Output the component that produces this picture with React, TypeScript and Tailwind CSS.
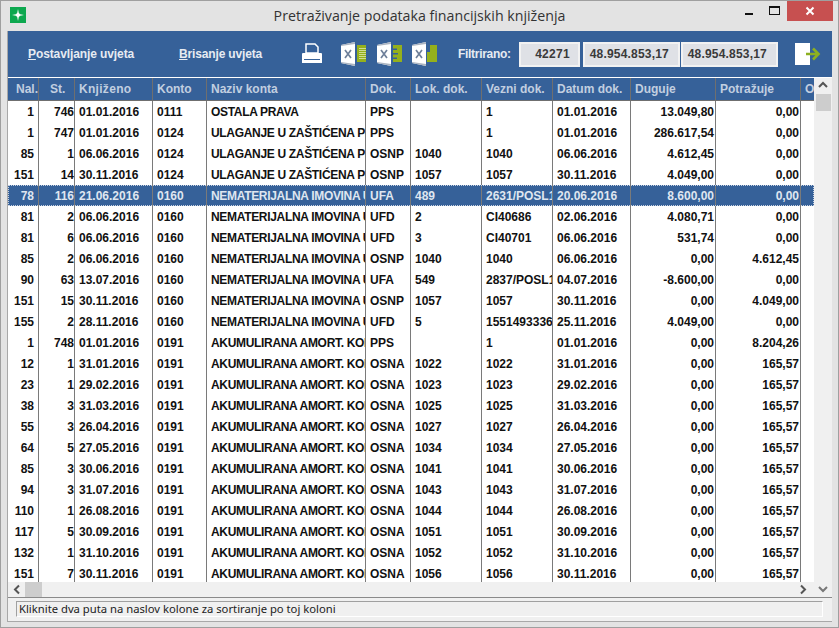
import React from "react";

const U = "ULAGANJE U ZAŠTIĆENA PRAVA";
const N = "NEMATERIJALNA IMOVINA U PRIPREMI";
const A = "AKUMULIRANA AMORT. KONCESIJA";
const rows: string[][] = [
  ["1","746","01.01.2016","0111","OSTALA PRAVA","PPS","","1","01.01.2016","13.049,80","0,00"],
  ["1","747","01.01.2016","0124",U,"PPS","","1","01.01.2016","286.617,54","0,00"],
  ["85","1","06.06.2016","0124",U,"OSNP","1040","1040","06.06.2016","4.612,45","0,00"],
  ["151","14","30.11.2016","0124",U,"OSNP","1057","1057","30.11.2016","4.049,00","0,00"],
  ["78","116","21.06.2016","0160",N,"UFA","489","2631/POSL1","20.06.2016","8.600,00","0,00"],
  ["81","2","06.06.2016","0160",N,"UFD","2","CI40686","02.06.2016","4.080,71","0,00"],
  ["81","6","06.06.2016","0160",N,"UFD","3","CI40701","06.06.2016","531,74","0,00"],
  ["85","2","06.06.2016","0160",N,"OSNP","1040","1040","06.06.2016","0,00","4.612,45"],
  ["90","63","13.07.2016","0160",N,"UFA","549","2837/POSL1","04.07.2016","-8.600,00","0,00"],
  ["151","15","30.11.2016","0160",N,"OSNP","1057","1057","30.11.2016","0,00","4.049,00"],
  ["155","2","28.11.2016","0160",N,"UFD","5","1551493336","25.11.2016","4.049,00","0,00"],
  ["1","748","01.01.2016","0191",A,"PPS","","1","01.01.2016","0,00","8.204,26"],
  ["12","1","31.01.2016","0191",A,"OSNA","1022","1022","31.01.2016","0,00","165,57"],
  ["23","1","29.02.2016","0191",A,"OSNA","1023","1023","29.02.2016","0,00","165,57"],
  ["38","3","31.03.2016","0191",A,"OSNA","1025","1025","31.03.2016","0,00","165,57"],
  ["55","3","26.04.2016","0191",A,"OSNA","1027","1027","26.04.2016","0,00","165,57"],
  ["64","5","27.05.2016","0191",A,"OSNA","1034","1034","27.05.2016","0,00","165,57"],
  ["85","3","30.06.2016","0191",A,"OSNA","1041","1041","30.06.2016","0,00","165,57"],
  ["94","3","31.07.2016","0191",A,"OSNA","1043","1043","31.07.2016","0,00","165,57"],
  ["110","1","26.08.2016","0191",A,"OSNA","1044","1044","26.08.2016","0,00","165,57"],
  ["117","5","30.09.2016","0191",A,"OSNA","1051","1051","30.09.2016","0,00","165,57"],
  ["132","1","31.10.2016","0191",A,"OSNA","1052","1052","31.10.2016","0,00","165,57"],
  ["151","7","30.11.2016","0191",A,"OSNA","1056","1056","30.11.2016","0,00","165,57"],
];

const cellCls = [
  "w-[31px] justify-end pr-[4px]",
  "w-[36px] justify-end pr-0",
  "w-[78px] pl-[4px]",
  "w-[54px] pl-[4px]",
  "w-[159px] pl-[4px] tracking-[-0.32px]",
  "w-[45px] pl-[4px]",
  "w-[71px] pl-[4px]",
  "w-[71px] pl-[4px]",
  "w-[78px] pl-[4px]",
  "w-[85px] justify-end pr-[1px]",
  "w-[85px] justify-end pr-[1px]",
];
const headCls = [
  "w-[31px] pl-[8px]",
  "w-[36px] pl-[11px]",
  "w-[78px] pl-[4px] tracking-[0.3px]",
  "w-[54px] pl-[4px]",
  "w-[159px] pl-[4px]",
  "w-[45px] pl-[4px]",
  "w-[71px] pl-[4px]",
  "w-[71px] pl-[4px]",
  "w-[78px] pl-[4px]",
  "w-[85px] pl-[4px]",
  "w-[85px] pl-[4px]",
];
const heads = ["Nal.","St.","Knjiženo","Konto","Naziv konta","Dok.","Lok. dok.","Vezni dok.","Datum dok.","Duguje","Potražuje"];

function ExcelIcon({ kind }: { kind: 0 | 1 | 2 }) {
  return (
    <svg width="26" height="24" viewBox="0 0 26 24" className="shrink-0">
      <path d="M0 3 L14 0 V24 L0 21 Z" fill="#fff" />
      <path d="M0 3 L14 0 V2 L0 4 Z" fill="#aab3c0" />
      <path d="M0 20 L14 22 V24 L0 21 Z" fill="#aab3c0" />
      <path d="M4 8 L10 16 M10 8 L4 16" stroke="#6f809a" strokeWidth="1.7" fill="none" />
      {kind === 0 && (
        <g>
          <rect x="16" y="3" width="9" height="17" fill="#95b01c" />
          <path d="M18 6.5H25M18 8.5H25M18 10.5H25M18 12.5H25M18 14.5H25M18 16.5H25" stroke="#dfe8b0" strokeWidth="0.8" />
        </g>
      )}
      {kind === 1 && (
        <path d="M16 3 H25 V20 H16 V17 H20 V15.5 H16 V12.5 H21 V11 H16 V8 H20 V6.5 H16 Z" fill="#95b01c" />
      )}
      {kind === 2 && (
        <path d="M15 10 H18 V3 H25 V20 H15 Z" fill="#95b01c" />
      )}
    </svg>
  );
}

export default function App() {
  return (
    <div className="w-[839px] h-[628px] flex flex-col bg-[#e3e3e3] border border-[#9f9f9f] overflow-hidden" style={{ fontFamily: '"Liberation Sans", Arial, sans-serif' }}>
      {/* Title bar */}
      <div className="h-[30px] shrink-0 flex items-start">
        <div className="w-[16px] h-[16px] mt-[6px] ml-[9px] bg-[#0da84f] flex items-center justify-center">
          <svg width="14" height="14" viewBox="0 0 14 14">
            <path d="M7 1 L8 6 L13 7 L8 8 L7 13 L6 8 L1 7 L6 6 Z" fill="#fff" />
            <circle cx="7" cy="7" r="2" fill="#fff" />
          </svg>
        </div>
        <div className="flex-1 text-center text-[14.2px] leading-[20px] pt-[5px] pl-[77px] text-[#333]" style={{ fontFamily: '"Open Sans", sans-serif' }}>
          Pretraživanje podataka financijskih knjiženja
        </div>
        <div className="flex items-start">
          <div className="w-[25px] h-[20px] flex items-center justify-center">
            <div className="w-[8px] h-[2px] mt-[6px] bg-[#111]" />
          </div>
          <div className="w-[26px] h-[20px] flex items-center justify-center">
            <div className="w-[11px] h-[9px] border border-[#111] border-t-2 -mt-[1px]" />
          </div>
          <div className="w-[46px] h-[20px] bg-[#c75050] flex items-center justify-center mr-[5px]">
            <svg width="10" height="10" viewBox="0 0 10 10"><path d="M1.5 1.5 L8.5 8.5 M8.5 1.5 L1.5 8.5" stroke="#fff" strokeWidth="2" /></svg>
          </div>
        </div>
      </div>

      {/* Content */}
      <div className="flex-1 min-h-0 mx-[6px] flex flex-col bg-[#f0f0f0] border-l border-[#a8a8a8]">
        {/* Toolbar */}
        <div className="h-[46px] shrink-0 bg-[#366199] flex items-center text-[12px] font-bold text-[#e6ebf2]">
          <div className="ml-[20px] w-[151px] tracking-[-0.1px]"><span className="underline">P</span>ostavljanje uvjeta</div>
          <div className="w-[122px] tracking-[-0.15px]"><span className="underline">B</span>risanje uvjeta</div>
          <svg width="22" height="22" viewBox="0 0 22 22" className="shrink-0">
            <path d="M5 10 V1 H14 L17 4 V10 Z" fill="#366199" stroke="#fff" strokeWidth="1.5" />
            <path d="M2 10 H20 Q21 10 21 11 V20 H1 V11 Q1 10 2 10 Z" fill="#fff" />
            <rect x="3" y="16" width="16" height="1" fill="#366199" />
          </svg>
          <div className="ml-[18px]"><ExcelIcon kind={0} /></div>
          <div className="ml-[10px]"><ExcelIcon kind={1} /></div>
          <div className="ml-[9px]"><ExcelIcon kind={2} /></div>
          <div className="ml-[20px] w-[61px] tracking-[-0.3px]">Filtrirano:</div>
          <div className="w-[61px] h-[25px] border-2 border-[#f2f2f2] bg-[#dfe1e6] text-[#3a3a3a] flex items-center justify-end pr-[8px] tracking-[0.3px]">42271</div>
          <div className="ml-[3px] w-[97px] h-[25px] border-2 border-[#f2f2f2] bg-[#dfe1e6] text-[#3a3a3a] flex items-center justify-end pr-[9px] tracking-[0.2px]">48.954.853,17</div>
          <div className="ml-[1px] w-[97px] h-[25px] border-2 border-[#f2f2f2] bg-[#dfe1e6] text-[#3a3a3a] flex items-center justify-end pr-[9px] tracking-[0.2px]">48.954.853,17</div>
          <svg width="26" height="22" viewBox="0 0 26 22" className="ml-[17px] shrink-0">
            <rect x="0" y="0" width="15" height="22" fill="#fff" />
            <path d="M11 11 H23 M18 5.5 L23.5 11 L18 16.5" stroke="#8db021" strokeWidth="2.6" fill="none" />
          </svg>
        </div>

        {/* Grid + vertical scrollbar */}
        <div className="flex-1 min-h-0 flex border-t border-white">
          <div className="w-[806px] shrink-0 flex flex-col overflow-hidden bg-white text-[12px] font-bold text-[#111]">
            <div className="h-[23px] shrink-0 flex bg-[#366199] text-[#c2cfe0] border-b border-[#6f6f6f]">
              {heads.map((h, i) => (
                <div key={h} className={`${headCls[i]} shrink-0 border-r border-[#6f6f6f] flex items-center whitespace-nowrap overflow-hidden`}>{h}</div>
              ))}
              <div className="flex-1 pl-[4px] flex items-center overflow-hidden">O</div>
            </div>
            {rows.map((r, ri) => {
              const sel = ri === 4;
              return (
                <div key={ri} className={`h-[21px] shrink-0 flex ${sel ? "bg-[#366199] text-[#dfe6f0] outline-1 outline-dotted outline-[#c9d3e2] -outline-offset-1" : ""}`}>
                  {r.map((c, i) => (
                    <div key={i} className={`${cellCls[i]} shrink-0 border-r border-[#7a7a7a] flex items-center whitespace-nowrap overflow-hidden`}>{c}</div>
                  ))}
                </div>
              );
            })}
          </div>
          <div className="w-[18px] shrink-0 bg-[#f0f0f0] flex flex-col items-center">
            <svg width="18" height="16" viewBox="0 0 18 16" className="shrink-0"><path d="M5 9 L9 5 L13 9" stroke="#555" strokeWidth="2" fill="none" /></svg>
            <div className="w-[15px] h-[17px] bg-[#cdcdcd]" />
          </div>
        </div>

        {/* Horizontal scrollbar */}
        <div className="h-[15px] shrink-0 bg-[#f0f0f0] flex items-center">
          <svg width="17" height="15" viewBox="0 0 17 15" className="shrink-0"><path d="M11 3.5 L7 7.5 L11 11.5" stroke="#555" strokeWidth="2" fill="none" /></svg>
          <div className="w-[17px] h-[15px] bg-[#cdcdcd]" />
          <div className="flex-1" />
          <svg width="17" height="15" viewBox="0 0 17 15" className="shrink-0 mr-[2px]"><path d="M6 3.5 L10 7.5 L6 11.5" stroke="#555" strokeWidth="2" fill="none" /></svg>
          <svg width="18" height="15" viewBox="0 0 18 15" className="shrink-0"><path d="M5 5 L9 9 L13 5" stroke="#777" strokeWidth="2" fill="none" /></svg>
        </div>

        {/* Status */}
        <div className="h-[24px] shrink-0 border-t border-[#8a8a8a] pl-[8px] pr-[9px] pt-[3px] bg-[#f0f0f0]">
          <div className="h-[16px] border-t border-l border-[#a0a0a0] border-r border-b border-r-white border-b-white flex items-center pl-[2px] text-[11.25px] text-[#222]" style={{ fontFamily: '"Noto Sans", sans-serif' }}>
            Kliknite dva puta na naslov kolone za sortiranje po toj koloni
          </div>
        </div>
      </div>
      <div className="h-[6px] shrink-0 border-t border-[#a8a8a8] mx-[6px]" />
    </div>
  );
}
